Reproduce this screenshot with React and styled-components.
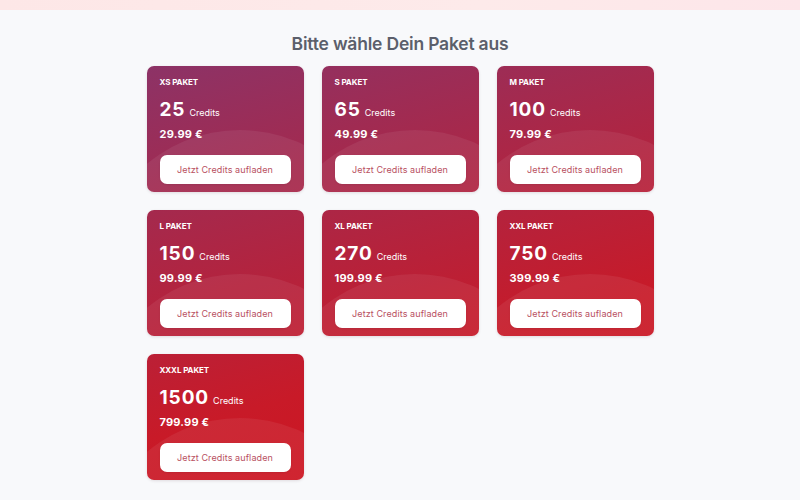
import React from "react";
import styled, { createGlobalStyle } from "styled-components";

const GlobalStyle = createGlobalStyle`
    html, body {
        margin: 0;
        padding: 0;
        background: #f8f9fb;
        font-family: "Inter", "Lato", sans-serif;
    }
`;

const TopBar = styled.div`
    height: 10px;
    background: linear-gradient(90deg, #fde7e7 0%, #fdeaea 60%, #fde6ea 100%);
`;

const Page = styled.div`
    display: flex;
    flex-direction: column;
    align-items: center;
    padding: 23px 0 20px;
`;

const Title = styled.h1`
    margin: 0 0 11px;
    font-size: 17.5px;
    line-height: 22px;
    font-weight: 600;
    color: #5b5f6b;
    letter-spacing: -0.2px;
`;

const Grid = styled.div`
    display: grid;
    grid-template-columns: repeat(3, 157px);
    grid-auto-rows: 126px;
    gap: 18px;
`;

const Card = styled.div`
    position: relative;
    overflow: hidden;
    border-radius: 7px;
    padding: 11px 13px 8px;
    box-sizing: border-box;
    display: flex;
    flex-direction: column;
    color: #fff;
    background: linear-gradient(164deg, #89346a 12%, #a8284a 38%, #c81a28 66%, #d2111c 90%) fixed;
    box-shadow: 0 1px 3px rgba(60, 20, 30, 0.12);

    &::after {
        content: "";
        position: absolute;
        left: -52px;
        top: 64px;
        width: 290px;
        height: 290px;
        border-radius: 50%;
        background: rgba(255, 255, 255, 0.065);
        pointer-events: none;
    }

    > * {
        position: relative;
        z-index: 1;
    }
`;

const Label = styled.div`
    font-size: 8px;
    line-height: 10px;
    font-weight: 700;
    text-transform: uppercase;
    letter-spacing: -0.1px;
`;

const Amount = styled.div`
    margin-top: 12px;
    display: flex;
    align-items: baseline;
    gap: 4px;
    line-height: 22px;
    .count {
        font-size: 19px;
        font-weight: 700;
        letter-spacing: 0.9px;
    }
    .unit {
        font-size: 9px;
        font-weight: 400;
    }
`;

const Price = styled.div`
    margin-top: 3px;
    font-size: 11px;
    line-height: 14px;
    font-weight: 700;
    letter-spacing: 0.2px;
`;

const BuyButton = styled.button`
    margin-top: auto;
    height: 29px;
    width: 100%;
    border: none;
    border-radius: 7px;
    background: #fff;
    color: #b9505f;
    font-family: inherit;
    font-size: 9px;
    font-weight: 400;
    letter-spacing: 0.1px;
    cursor: pointer;
    box-shadow: 0 1px 2px rgba(0, 0, 0, 0.08);
`;

const packages = [
    { name: "XS Paket", credits: 25, price: "29.99 €" },
    { name: "S Paket", credits: 65, price: "49.99 €" },
    { name: "M Paket", credits: 100, price: "79.99 €" },
    { name: "L Paket", credits: 150, price: "99.99 €" },
    { name: "XL Paket", credits: 270, price: "199.99 €" },
    { name: "XXL Paket", credits: 750, price: "399.99 €" },
    { name: "XXXL Paket", credits: 1500, price: "799.99 €" },
];

const PackageCard = ({ name, credits, price }) => (
    <Card>
        <Label>{name}</Label>
        <Amount>
            <span className="count">{credits}</span>
            <span className="unit">Credits</span>
        </Amount>
        <Price>{price}</Price>
        <BuyButton>Jetzt Credits aufladen</BuyButton>
    </Card>
);

const App = () => (
    <>
        <GlobalStyle />
        <TopBar />
        <Page>
            <Title>Bitte wähle Dein Paket aus</Title>
            <Grid>
                {packages.map((p) => (
                    <PackageCard key={p.name} {...p} />
                ))}
            </Grid>
        </Page>
    </>
);

export default App;
